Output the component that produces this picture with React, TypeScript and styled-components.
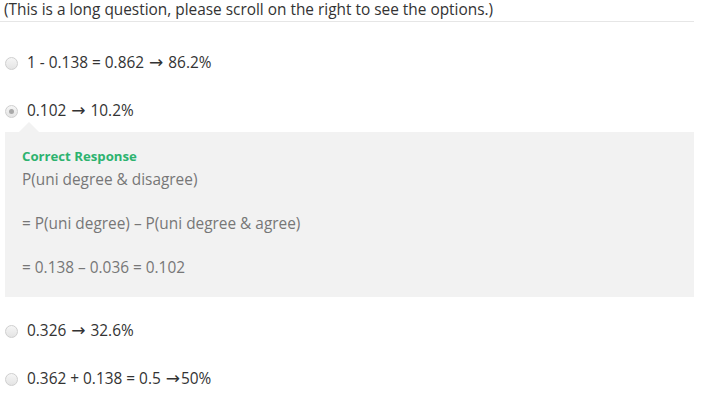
import React from 'react';
import styled, { createGlobalStyle } from 'styled-components';

interface IOption {
  id: string;
  text: string;
  selected?: boolean;
  feedback?: string[];
}

const GlobalStyle = createGlobalStyle`
  body {
    margin: 0;
    background: #fff;
    font-family: "Open Sans", "Liberation Sans", sans-serif;
    color: #333;
  }
`;

const Question = styled.div`
  width: 694px;
`;

const Prompt = styled.div`
  padding: 0 0 1px 4px;
  font-size: 15.4px;
  line-height: 20px;
  border-bottom: 1px solid #e6e6e6;
`;

const OptionList = styled.div`
  display: flex;
  flex-direction: column;
  padding-top: 16px;
`;

const OptionRow = styled.label<{ $open?: boolean }>`
  display: flex;
  align-items: center;
  gap: 9px;
  padding: 15px 0 ${(p) => (p.$open ? 0 : 13)}px 5px;
  font-size: 15.4px;
  line-height: 20px;
  color: #333;
`;

const OptionText = styled.span`
  display: block;
  height: 20px;
  white-space: nowrap;
`;

const Arrow = styled.span`
  font-family: "DejaVu Sans", sans-serif;
  font-size: 17px;
  line-height: 0;
  margin: 0 1px;
`;

const Radio = styled.span<{ $checked?: boolean }>`
  box-sizing: border-box;
  width: 13px;
  height: 13px;
  border-radius: 50%;
  border: 1px solid #cfcfcf;
  background: linear-gradient(#f6f6f6, #e4e4e4);
  display: flex;
  align-items: center;
  justify-content: center;

  &::after {
    content: '';
    width: 5px;
    height: 5px;
    border-radius: 50%;
    background: ${(p) => (p.$checked ? '#a9a9a9' : 'transparent')};
  }
`;

const Feedback = styled.div`
  position: relative;
  margin: 11px 0 9px 5px;
  padding: 15px 17px 18px;
  background: #f2f2f2;

  &::before {
    content: '';
    position: absolute;
    top: -10px;
    left: 14px;
    border-left: 10px solid transparent;
    border-right: 10px solid transparent;
    border-bottom: 10px solid #f2f2f2;
  }
`;

const FeedbackTitle = styled.div`
  font-size: 13.2px;
  line-height: 18px;
  font-weight: 700;
  color: #2db36f;
  margin-bottom: 4px;
`;

const FeedbackLine = styled.p`
  margin: 0;
  font-size: 15.4px;
  line-height: 22px;
  color: #777;
  min-height: 22px;
`;

const options: IOption[] = [
  { id: 'a', text: '1 - 0.138 = 0.862 → 86.2%' },
  {
    id: 'b',
    text: '0.102 → 10.2%',
    selected: true,
    feedback: [
      'P(uni degree & disagree)',
      '',
      '= P(uni degree) – P(uni degree & agree)',
      '',
      '= 0.138 – 0.036 = 0.102',
    ],
  },
  { id: 'c', text: '0.326 → 32.6%' },
  { id: 'd', text: '0.362 + 0.138 = 0.5 →50%' },
];

const withArrows = (text: string) => text.split('→').map((part, i) => (
  <React.Fragment key={i}>
    {i > 0 && <Arrow>→</Arrow>}
    {part}
  </React.Fragment>
));

const App: React.FC = () => (
  <>
    <GlobalStyle />
    <Question>
      <Prompt>(This is a long question, please scroll on the right to see the options.)</Prompt>

      <OptionList>
        {options.map(({ id, text, selected, feedback }) => (
          <React.Fragment key={id}>
            <OptionRow $open={!!feedback}>
              <Radio $checked={selected} />
              <OptionText>{withArrows(text)}</OptionText>
            </OptionRow>

            {feedback && (
              <Feedback>
                <FeedbackTitle>Correct Response</FeedbackTitle>
                {feedback.map((line, i) => (
                  <FeedbackLine key={i}>{line}</FeedbackLine>
                ))}
              </Feedback>
            )}
          </React.Fragment>
        ))}
      </OptionList>
    </Question>
  </>
);

export default App;
